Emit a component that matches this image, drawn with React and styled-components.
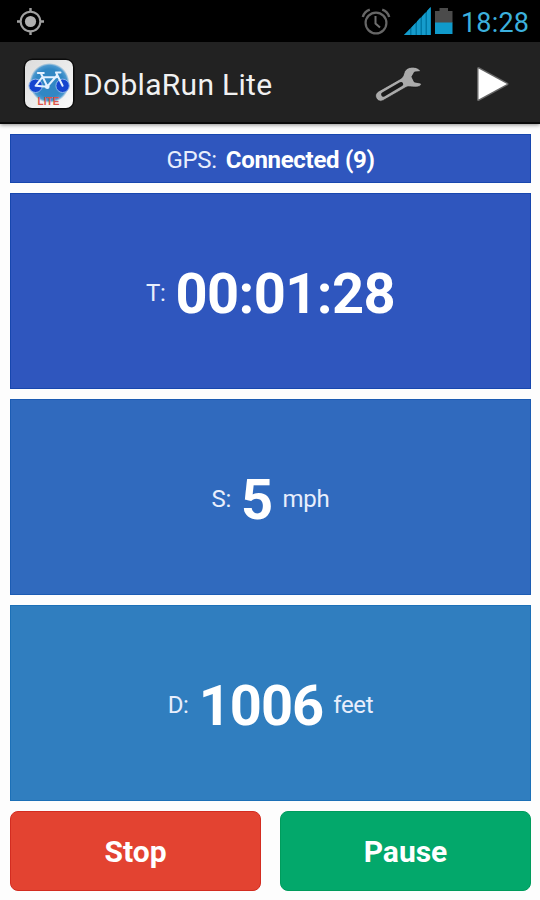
import React, { Fragment } from "react";
import styled, { createGlobalStyle } from "styled-components";

const GlobalStyle = createGlobalStyle`
  * {
    box-sizing: border-box;
  }

  body {
    margin: 0;
    background: #fdfdfd;
    font-family: Roboto, "Liberation Sans", sans-serif;
  }
`;

const Screen = styled.div`
  width: 540px;
  height: 900px;
  display: flex;
  flex-direction: column;
  overflow: hidden;
`;

const StatusBar = styled.div`
  height: 42px;
  flex-shrink: 0;
  display: flex;
  align-items: center;
  justify-content: space-between;
  padding: 0 10px 0 16px;
  background: #000;

  & svg {
    display: block;
  }
`;

const StatusIcons = styled.div`
  display: flex;
  align-items: center;
`;

const SignalGroup = styled.div`
  display: flex;
  align-items: center;
  gap: 4px;
  margin-left: 13px;
`;

const Clock = styled.span`
  margin-left: 8px;
  width: 69px;
  font-size: 27px;
  line-height: 42px;
  padding-top: 3px;
  letter-spacing: 0.2px;
  white-space: nowrap;
  color: #3cb0dd;
`;

const ActionBar = styled.div`
  height: 82px;
  flex-shrink: 0;
  display: flex;
  align-items: center;
  padding: 3px 30px 0 23px;
  background: #222;
  border-bottom: 2px solid #0a0a0a;
  box-shadow: 0 1px 4px rgba(0, 0, 0, 0.45);

  & svg {
    display: block;
  }
`;

const Title = styled.h1`
  flex: 1;
  margin: 1px 0 0 8px;
  font-size: 30px;
  font-weight: 400;
  letter-spacing: 0.3px;
  color: #f1f1f1;
`;

const Actions = styled.div`
  display: flex;
  align-items: center;
  gap: 50px;
`;

const Content = styled.div`
  flex: 1;
  display: flex;
  flex-direction: column;
  gap: 10px;
  padding: 10px 9px 9px 10px;
`;

const Panel = styled.div`
  flex: ${(props) => (props.$height ? `0 0 ${props.$height}` : "1")};
  display: flex;
  align-items: center;
  justify-content: center;
  gap: ${(props) => props.$gap || "10px"};
  padding-top: ${(props) => (props.$height ? "2px" : "4px")};
  background: ${(props) => props.$color};
  border: 1px solid ${(props) => props.$edge};
  color: #fff;
`;

const Label = styled.span`
  font-size: 24px;
  letter-spacing: -0.3px;
  color: #e8eefc;
`;

const Status = styled.span`
  font-size: 24px;
  font-weight: 700;
  letter-spacing: -0.3px;
`;

const Value = styled.span`
  font-size: 56px;
  font-weight: 700;
  line-height: 64px;
  padding-top: 1px;
  letter-spacing: ${(props) => props.$spacing || "-0.6px"};
`;

const Buttons = styled.div`
  flex: 0 0 80px;
  display: flex;
  gap: 19px;
`;

const Button = styled.button`
  flex: 1;
  padding: 0;
  border: 1px solid ${(props) => props.$edge};
  border-radius: 8px;
  background: ${(props) => props.$color};
  color: #fff;
  font-family: inherit;
  font-size: 30px;
  font-weight: 700;
`;

const LogoText = styled.text`
  font-family: "Liberation Sans", sans-serif;
  font-size: 10px;
  font-weight: 700;
`;

const GpsIcon = () => (
  <svg width="29" height="30" viewBox="0 0 29 30" fill="none">
    <circle cx="14.5" cy="15.5" r="9.8" stroke="#a0a0a0" strokeWidth="2" />
    <circle cx="14.5" cy="15.5" r="5.6" fill="#b0b0b0" />
    <path
      d="M14.5 2v4M14.5 25v4M1 15.5h4M24 15.5h4"
      stroke="#a0a0a0"
      strokeWidth="2.4"
    />
  </svg>
);

const AlarmIcon = () => (
  <svg width="30" height="30" viewBox="0 0 30 30" fill="none">
    <circle cx="15" cy="17" r="10.4" stroke="#666" strokeWidth="2.2" />
    <path d="M14.5 10v7.5l4.5 4" stroke="#707070" strokeWidth="2" />
    <path
      d="M1.8 11C2.8 7.5 5 5 8.8 3.7M28.2 11C27.2 7.5 25 5 21.2 3.7"
      stroke="#666"
      strokeWidth="2.4"
    />
  </svg>
);

const SignalIcon = () => (
  <svg width="27" height="30" viewBox="0 0 27 30">
    <path d="M0 29L27 1v28z" fill="#0079a6" />
    <path
      d="M0 29l6-6v6zM7.5 21.5l4-4.5v12h-4zM13 15.5l3.5-4v17.5H13zM18 10.5l3.5-4V29H18zM23 5l3.5-4V29H23z"
      fill="#159ccc"
    />
  </svg>
);

const BatteryIcon = () => (
  <svg width="18" height="28" viewBox="0 0 18 28">
    <path d="M0 4h4.5V1h8.5v3h4.5v12H0z" fill="#4b4b4b" />
    <path d="M0 15.5h17.5V27H0z" fill="#109acb" />
  </svg>
);

const Logo = () => (
  <svg width="52" height="52" viewBox="0 0 52 52" fill="none">
    <defs>
      <linearGradient id="tile" x1="0" y1="0" x2="1" y2="1">
        <stop offset="0" stopColor="#dcdcdc" />
        <stop offset="1" stopColor="#fafafa" />
      </linearGradient>
      <radialGradient id="disc">
        <stop offset="0.7" stopColor="#3187c4" />
        <stop offset="0.88" stopColor="#4b98cf" />
        <stop offset="1" stopColor="#4b98cf" stopOpacity="0" />
      </radialGradient>
    </defs>
    <rect x="0.5" y="0.5" width="51" height="51" rx="9" fill="#0b0b0b" />
    <rect x="2" y="2" width="48" height="48" rx="7" fill="url(#tile)" />
    <circle cx="26.5" cy="25" r="20" fill="url(#disc)" />
    <circle cx="12.6" cy="27.8" r="6.7" fill="#1545cf" stroke="#8db5ea" strokeWidth="1" />
    <circle cx="39.6" cy="27.8" r="6.7" fill="#1545cf" stroke="#8db5ea" strokeWidth="1" />
    <path
      d="M12.6 27.8l6.4-8.3M18 15.5l6.3 13L34 17.5M19.5 19.3h14M39.6 27.8L33 14.5h4.5M12.6 27.8l11.7 1M14.8 15h6"
      stroke="#e4f1ff"
      strokeWidth="2"
      strokeLinejoin="round"
      strokeLinecap="round"
    />
    <circle cx="24.3" cy="28.8" r="2.3" fill="#e4f1ff" />
    <LogoText x="14.5" y="47" textLength="22" fill="#dc5348">
      LITE
    </LogoText>
  </svg>
);

const WrenchIcon = () => (
  <svg width="52" height="42" viewBox="0 0 52 42">
    <path
      d="M46 7.3C43.5 3.6 35.5 2.8 31.8 6.7C29.3 9.2 30.3 12.8 27.3 15.2L4.5 28.2C.8 30.5 1 34 3.2 36.5C5 38.7 7.5 38.5 9.7 37.2L32.3 24.2C36 22.2 43.5 26.6 47.3 21.7L47 20.2L40.3 18.9L37.8 13.8L40.5 9L46.5 8.5z"
      fill="#aaa"
      stroke="#111"
      strokeWidth="0.7"
    />
    <path
      d="M9.3 31.5L27 21.2"
      stroke="#1a1a1a"
      strokeWidth="4.4"
      strokeLinecap="round"
    />
  </svg>
);

const PlayIcon = () => (
  <svg width="34" height="38" viewBox="0 0 34 38">
    <path
      d="M2.5 3.5L31 19L2.5 34.5z"
      fill="#fff"
      stroke="#666"
      strokeWidth="3"
      strokeLinejoin="round"
      paintOrder="stroke"
    />
  </svg>
);

const App = () => {
  return (
    <Fragment>
      <GlobalStyle />
      <Screen>
        <StatusBar>
          <GpsIcon />
          <StatusIcons>
            <AlarmIcon />
            <SignalGroup>
              <SignalIcon />
              <BatteryIcon />
            </SignalGroup>
            <Clock>18:28</Clock>
          </StatusIcons>
        </StatusBar>
        <ActionBar>
          <Logo />
          <Title>DoblaRun Lite</Title>
          <Actions>
            <WrenchIcon />
            <PlayIcon />
          </Actions>
        </ActionBar>
        <Content>
          <Panel $height="49px" $gap="9px" $color="#2f56be" $edge="#1746ae">
            <Label>GPS:</Label>
            <Status>Connected (9)</Status>
          </Panel>
          <Panel $color="#2f56be" $edge="#1746ae">
            <Label>T:</Label>
            <Value>00:01:28</Value>
          </Panel>
          <Panel $color="#306abe" $edge="#1c5cb3">
            <Label>S:</Label>
            <Value>5</Value>
            <Label>mph</Label>
          </Panel>
          <Panel $color="#307ebf" $edge="#1c70b7">
            <Label>D:</Label>
            <Value $spacing="-1px">1006</Value>
            <Label>feet</Label>
          </Panel>
          <Buttons>
            <Button $color="#e34331" $edge="#d32c20">
              Stop
            </Button>
            <Button $color="#03a86b" $edge="#009c5d">
              Pause
            </Button>
          </Buttons>
        </Content>
      </Screen>
    </Fragment>
  );
};

export default App;
